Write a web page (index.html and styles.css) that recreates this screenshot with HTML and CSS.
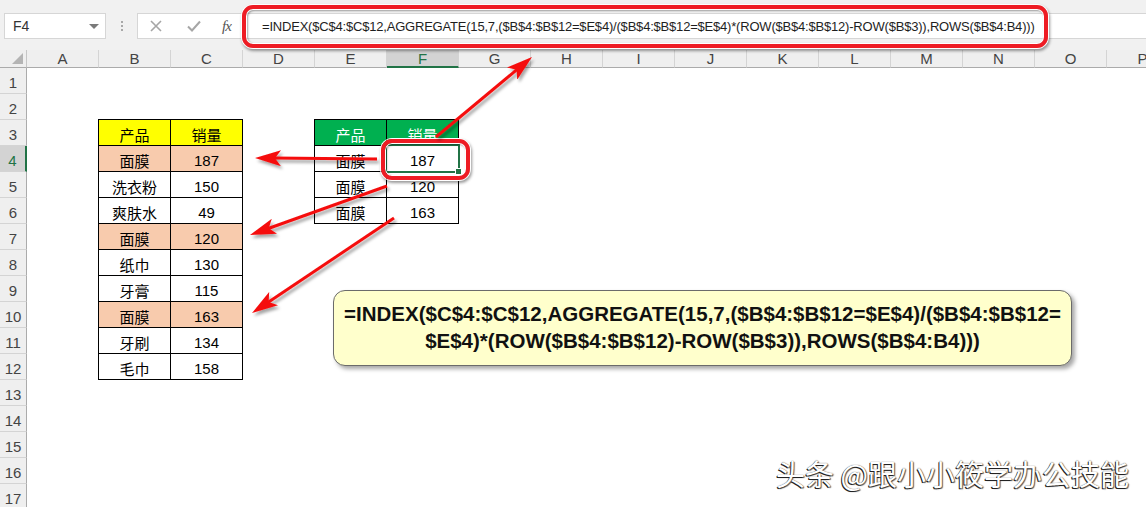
FILE: index.html
```html
<!DOCTYPE html>
<html lang="zh-CN">
<head>
    <meta charset="UTF-8">
    <title>AGGREGATE 一对多查找</title>
    <link rel="stylesheet" href="styles.css">
</head>
<body>
    <div class="app">
        <div class="toolbar">
            <div class="namebox"><span>F4</span><span class="caret"></span></div>
            <div class="grip"><i></i><i></i><i></i></div>
            <div class="fx-buttons">
                <svg class="btn-x" width="12" height="12" viewBox="0 0 12 12"><path d="M1 1L11 11M11 1L1 11" stroke="#a6a6a6" stroke-width="1.6" fill="none"/></svg>
                <svg class="btn-ok" width="14" height="12" viewBox="0 0 14 12"><path d="M1 6.5L5 10.5L13 1.5" stroke="#a6a6a6" stroke-width="2" fill="none"/></svg>
                <span class="btn-fx">fx</span>
            </div>
            <div class="formula-input">=INDEX($C$4:$C$12,AGGREGATE(15,7,($B$4:$B$12=$E$4)/($B$4:$B$12=$E$4)*(ROW($B$4:$B$12)-ROW($B$3)),ROWS($B$4:B4)))</div>
        </div>

        <div class="sheet">
            <div class="corner"></div>
            <div class="col-head">A</div>
            <div class="col-head">B</div>
            <div class="col-head">C</div>
            <div class="col-head">D</div>
            <div class="col-head">E</div>
            <div class="col-head active">F</div>
            <div class="col-head">G</div>
            <div class="col-head">H</div>
            <div class="col-head">I</div>
            <div class="col-head">J</div>
            <div class="col-head">K</div>
            <div class="col-head">L</div>
            <div class="col-head">M</div>
            <div class="col-head">N</div>
            <div class="col-head">O</div>
            <div class="col-head">P</div>

            <div class="row-head">1</div>
            <div class="row-head">2</div>
            <div class="row-head">3</div>
            <div class="row-head active">4</div>
            <div class="row-head">5</div>
            <div class="row-head">6</div>
            <div class="row-head">7</div>
            <div class="row-head">8</div>
            <div class="row-head">9</div>
            <div class="row-head">10</div>
            <div class="row-head">11</div>
            <div class="row-head">12</div>
            <div class="row-head">13</div>
            <div class="row-head">14</div>
            <div class="row-head">15</div>
            <div class="row-head">16</div>
            <div class="row-head">17</div>

            <!-- 源数据 B3:C12 -->
            <div class="tbl tbl-left">
                <div class="cell head-yellow">产品</div><div class="cell head-yellow">销量</div>
                <div class="cell hit">面膜</div><div class="cell hit">187</div>
                <div class="cell">洗衣粉</div><div class="cell">150</div>
                <div class="cell">爽肤水</div><div class="cell">49</div>
                <div class="cell hit">面膜</div><div class="cell hit">120</div>
                <div class="cell">纸巾</div><div class="cell">130</div>
                <div class="cell">牙膏</div><div class="cell">115</div>
                <div class="cell hit">面膜</div><div class="cell hit">163</div>
                <div class="cell">牙刷</div><div class="cell">134</div>
                <div class="cell">毛巾</div><div class="cell">158</div>
            </div>

            <!-- 查找结果 E3:F6 -->
            <div class="tbl tbl-right">
                <div class="cell head-green">产品</div><div class="cell head-green">销量</div>
                <div class="cell">面膜</div><div class="cell sel">187</div>
                <div class="cell">面膜</div><div class="cell">120</div>
                <div class="cell">面膜</div><div class="cell">163</div>
            </div>
        </div>

        <div class="formula-mark"></div>
        <div class="cell-mark"></div>

        <svg class="arrows" width="1146" height="507" viewBox="0 0 1146 507">
            <defs>
                <marker id="head" markerUnits="userSpaceOnUse" markerWidth="26" markerHeight="16" refX="11" refY="8" orient="auto">
                    <path d="M0 0L26 8L0 16L6 8Z" fill="#f50d0d"/>
                </marker>
                <filter id="shade" x="-20%" y="-20%" width="140%" height="140%">
                    <feDropShadow dx="2" dy="3" stdDeviation="1.5" flood-color="#000" flood-opacity="0.35"/>
                </filter>
            </defs>
            <g stroke="#f50d0d" stroke-width="3" fill="none" marker-end="url(#head)" filter="url(#shade)">
                <line x1="436" y1="137" x2="520.5" y2="66.6"/>
                <line x1="377" y1="159" x2="270" y2="158.1"/>
                <line x1="387" y1="186" x2="264.1" y2="230"/>
                <line x1="394" y1="218" x2="264.5" y2="304.7"/>
            </g>
        </svg>

        <div class="callout">
            =INDEX($C$4:$C$12,AGGREGATE(15,7,($B$4:$B$12=$E$4)/($B$4:$B$12=<br>$E$4)*(ROW($B$4:$B$12)-ROW($B$3)),ROWS($B$4:B4)))
        </div>

        <div class="watermark">头条 @跟小小筱学办公技能</div>
    </div>
</body>
</html>
```

FILE: styles.css
```css
body {
    margin: 0;
    font-family: "Liberation Sans", "Noto Sans CJK SC", sans-serif;
    background: #fff;
}

.app {
    position: relative;
    width: 1146px;
    height: 507px;
    overflow: hidden;
}

/* formula bar */
.toolbar {
    height: 50px;
    box-sizing: border-box;
    padding-top: 13px;
    background: #f1f1f1;
    display: flex;
    align-items: flex-start;
}

.namebox {
    margin-left: 4px;
    width: 102px;
    height: 26px;
    box-sizing: border-box;
    background: #fff;
    border: 1px solid #d6d6d6;
    display: flex;
    align-items: center;
    justify-content: space-between;
    padding: 0 6px 0 8px;
    font-size: 14px;
    color: #333;
}

.caret {
    border-left: 5px solid transparent;
    border-right: 5px solid transparent;
    border-top: 5px solid #7a7a7a;
}

.grip {
    width: 31px;
    height: 26px;
    display: flex;
    flex-direction: column;
    align-items: center;
    justify-content: center;
    gap: 2px;
}

.grip i {
    width: 2px;
    height: 2px;
    background: #a8a8a8;
}

.fx-buttons {
    width: 106px;
    height: 26px;
    box-sizing: border-box;
    background: #fff;
    border: 1px solid #d6d6d6;
    border-right: none;
    display: flex;
    align-items: center;
    padding-left: 12px;
}

.btn-x { margin-right: 25px; }
.btn-ok { margin-right: 21px; }

.btn-fx {
    font-family: "Liberation Serif", serif;
    font-style: italic;
    font-size: 15px;
    color: #555;
    letter-spacing: -1px;
}

.formula-input {
    flex: 1;
    height: 26px;
    box-sizing: border-box;
    background: #fff;
    border: 1px solid #d6d6d6;
    border-right: none;
    padding-left: 18px;
    display: flex;
    align-items: center;
    font-size: 13px;
    letter-spacing: -0.2px;
    color: #1e1e1e;
    white-space: nowrap;
    overflow: hidden;
}

/* sheet */
.sheet {
    display: grid;
    grid-template-columns: 27px repeat(16, 72px);
    grid-template-rows: 18px repeat(17, 26px);
}

.corner {
    position: relative;
    background: #efefef;
    border-right: 1px solid #c6c6c6;
    border-bottom: 1px solid #ababab;
}

.corner::after {
    content: "";
    position: absolute;
    right: 3px;
    bottom: 3px;
    border-left: 11px solid transparent;
    border-bottom: 11px solid #b4b4b4;
}

.col-head {
    box-sizing: border-box;
    background: #efefef;
    border-right: 1px solid #d4d4d4;
    border-bottom: 1px solid #ababab;
    display: flex;
    align-items: center;
    justify-content: center;
    font-size: 15px;
    color: #444;
}

.col-head.active {
    background: #d3d3d3;
    color: #217346;
    border-bottom: 2px solid #217346;
}

.row-head {
    grid-column: 1;
    box-sizing: border-box;
    background: #efefef;
    border-right: 1px solid #ababab;
    border-bottom: 1px solid #d4d4d4;
    display: flex;
    align-items: flex-end;
    justify-content: center;
    padding-bottom: 2px;
    font-size: 15px;
    color: #444;
}

.row-head.active {
    background: #d3d3d3;
    color: #217346;
    border-right: 2px solid #217346;
}

.tbl {
    display: grid;
    grid-template-columns: 72px 72px;
    grid-auto-rows: 26px;
    margin: -1px 0 0 -1px;
    border-left: 1px solid #000;
    border-top: 1px solid #000;
}

.tbl-left {
    grid-column: 3 / span 2;
    grid-row: 4 / span 10;
}

.tbl-right {
    grid-column: 6 / span 2;
    grid-row: 4 / span 4;
}

.cell {
    position: relative;
    box-sizing: border-box;
    border-right: 1px solid #000;
    border-bottom: 1px solid #000;
    display: flex;
    align-items: center;
    justify-content: center;
    padding-top: 3px;
    font-size: 15px;
    color: #000;
}

.head-yellow { background: #ffff00; }
.head-green { background: #00b050; color: #fff; }
.hit { background: #f8cbad; }

/* active cell F4 */
.sel::after {
    content: "";
    position: absolute;
    left: -2px;
    top: -2px;
    right: -2px;
    bottom: -2px;
    border: 2px solid #217346;
}

.sel::before {
    content: "";
    position: absolute;
    right: -4px;
    bottom: -4px;
    width: 5px;
    height: 5px;
    background: #217346;
    border: 1px solid #fff;
    z-index: 1;
}

/* annotations */
.formula-mark, .cell-mark {
    position: absolute;
    box-sizing: border-box;
    border: 4px solid #ee1c24;
    border-radius: 11px;
    box-shadow: 0 0 0 1px #fff, 1px 2px 3px 1px rgba(0, 0, 0, 0.4), inset 0 0 0 1px #fff, inset 1px 1px 2px 1px rgba(0, 0, 0, 0.35);
}

.formula-mark {
    left: 242px;
    top: 5px;
    width: 806px;
    height: 43px;
}

.cell-mark {
    left: 381px;
    top: 139px;
    width: 89px;
    height: 41px;
}

.arrows {
    position: absolute;
    left: 0;
    top: 0;
    pointer-events: none;
}

.callout {
    position: absolute;
    left: 333px;
    top: 290px;
    width: 739px;
    height: 76px;
    box-sizing: border-box;
    padding-top: 9px;
    background: #ffffcc;
    border: 1px solid #6b6b6b;
    border-radius: 12px;
    box-shadow: 3px 3px 4px rgba(0, 0, 0, 0.35);
    text-align: center;
    font-size: 20.5px;
    font-weight: bold;
    line-height: 27px;
    color: #111;
    white-space: nowrap;
}

.watermark {
    position: absolute;
    left: 776px;
    top: 452px;
    font-family: "Noto Sans CJK SC", sans-serif;
    font-size: 29px;
    color: #fff;
    text-shadow: -1px 1px 0 #222, 1px 1px 1px #555, 0 0 1px #333;
    white-space: nowrap;
}
```
